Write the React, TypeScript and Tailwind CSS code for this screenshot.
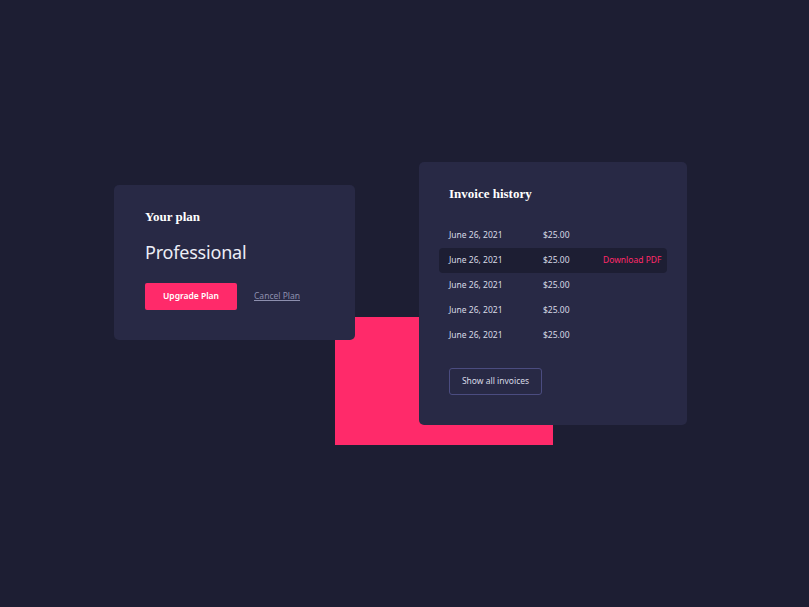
const invoices = [
  { date: "June 26, 2021", amount: "$25.00", active: false },
  { date: "June 26, 2021", amount: "$25.00", active: true },
  { date: "June 26, 2021", amount: "$25.00", active: false },
  { date: "June 26, 2021", amount: "$25.00", active: false },
  { date: "June 26, 2021", amount: "$25.00", active: false },
];

export default function App() {
  return (
    <div
      className="w-full h-[607px] bg-[#1d1e33] flex justify-center pt-[162px] pr-[8px]"
      style={{ fontFamily: '"Noto Sans", sans-serif' }}
    >
      <div className="relative flex items-start">
        {/* pink block behind the cards */}
        <div className="absolute left-[221px] top-[155px] w-[218px] h-[128px] bg-[#ff2a6a]" />

        {/* --- Plan card --- */}
        <div className="relative mt-[23px] w-[241px] h-[155px] rounded-[5px] bg-[#282945] px-[31px] pt-[25px]">
          <h2 className="text-[13px] font-bold text-white leading-none" style={{ fontFamily: '"Liberation Serif", serif' }}>
            Your plan
          </h2>
          <div className="mt-[20px] text-[18px] text-[#eceef6] leading-none tracking-[-0.2px]">Professional</div>
          <div className="mt-[22px] flex items-center">
            <button className="w-[92px] h-[27px] rounded-[2px] bg-[#ff2a6a] text-white text-[8.5px] font-semibold">
              Upgrade Plan
            </button>
            <a className="ml-[17px] text-[8.5px] text-[#8d8fae] underline">Cancel Plan</a>
          </div>
        </div>

        {/* --- Invoice card --- */}
        <div className="relative ml-[64px] w-[268px] h-[263px] rounded-[5px] bg-[#282945] pt-[25px] px-[20px]">
          <h2
            className="px-[10px] text-[13px] font-bold text-white leading-none"
            style={{ fontFamily: '"Liberation Serif", serif' }}
          >
            Invoice history
          </h2>
          <div className="mt-[23px] flex flex-col">
            {invoices.map((r, i) => (
              <div
                key={i}
                className={
                  "flex items-center h-[25px] px-[10px] rounded-[4px] text-[8.5px] whitespace-nowrap " +
                  (r.active ? "bg-[#1d1e33]" : "")
                }
              >
                <span className="w-[94px] shrink-0 text-[#d8dae6]">{r.date}</span>
                <span className="w-[60px] shrink-0 text-[#d8dae6]">{r.amount}</span>
                {r.active && <span className="text-[#ff2a6a]">Download PDF</span>}
              </div>
            ))}
          </div>
          <button className="mt-[20px] ml-[10px] w-[93px] h-[27px] rounded-[3px] border border-[#4b4c80] text-[8.5px] text-[#d8dae6]">
            Show all invoices
          </button>
        </div>
      </div>
    </div>
  );
}
